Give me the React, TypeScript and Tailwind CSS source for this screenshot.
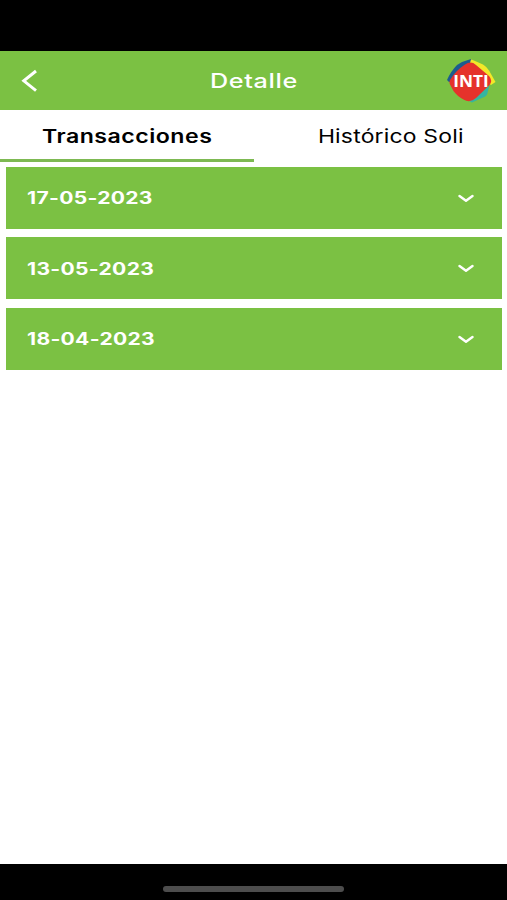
const dates = ["17-05-2023", "13-05-2023", "18-04-2023"];

function Logo() {
  return (
    <svg className="h-[46px] w-[50px]" viewBox="0 0 50 46" aria-label="INTI">
      <path d="M1 22 Q5 13 11 7 Q17 3 25 1 L28 4 L22 10 L8 24 L3 24Z" fill="#1c5c8f" />
      <path d="M25 1.2 L37 6.5 Q41 9 43 12.5 L49.5 24 L45 27 L34 18 L24 5Z" fill="#f3e829" />
      <path d="M43.5 27 L41.5 35 Q41 38 37 39.5 L26 44.5 L22 42.5 L34 30Z" fill="#35b5a0" />
      <path d="M19 6.5 Q25 2.5 30 7 L43 18 Q47 22.5 43.5 27 L30 40 Q24 45.5 17.5 41.5 Q11 38 7.5 33 L4 26.5 Q2.5 23.5 5 20.5 Q10 12.5 19 6.5Z" fill="#e5322b" />
      <text x="7.2" y="28.7" fill="#fff" fontFamily="Open Sans, sans-serif" fontWeight="700" fontSize="16.5" textLength="35.5" lengthAdjust="spacingAndGlyphs">INTI</text>
    </svg>
  );
}

export default function App() {
  return (
    <div className="flex h-[900px] w-[507px] flex-col overflow-hidden bg-black font-['Inter',sans-serif]">
      <div className="h-[51px] shrink-0" />
      <header className="flex h-[59px] shrink-0 items-center justify-between bg-[#7bc143] text-white">
        <div className="flex w-[70px] pl-5">
          <svg className="h-6 w-5" viewBox="0 0 20 24" fill="none" stroke="#fff" strokeWidth="3">
            <path d="M16 2 L3.8 11.8 L16 21.6" />
          </svg>
        </div>
        <h1 className="scale-x-[1.26] text-[20px] font-medium tracking-[0.5px]">Detalle</h1>
        <div className="flex w-[70px] justify-end pr-[11px]">
          <Logo />
        </div>
      </header>
      <main className="flex flex-1 flex-col bg-white">
        <nav className="flex h-[52px] shrink-0 text-black">
          <div className="flex w-[254px] justify-center border-b-[3px] border-[#7db952] pt-[11.5px]">
            <span className="scale-x-[1.25] text-[18.5px] leading-7 font-semibold tracking-[0.4px]">Transacciones</span>
          </div>
          <div className="flex flex-1 justify-center pt-[11.5px] pl-[20px]">
            <span className="scale-x-[1.24] text-[18.5px] leading-7 tracking-[0.15px] whitespace-nowrap">Histórico Soli</span>
          </div>
        </nav>
        <ul className="flex flex-col gap-[8.3px] pt-[5px] pr-[5px] pl-[6px]">
          {dates.map((date) => (
            <li key={date} className="flex h-[62px] items-center justify-between bg-[#7bc143] pr-[28px] pl-[21px] text-white">
              <span className="origin-left scale-x-[1.24] pt-0.5 text-[17px] font-bold tracking-[0.25px]">{date}</span>
              <svg className="h-3 w-4" viewBox="0 0 16 12" fill="none" stroke="#fff" strokeWidth="2.4" strokeLinecap="round" strokeLinejoin="round">
                <path d="M1.5 4 L8 8.8 L14.5 4" />
              </svg>
            </li>
          ))}
        </ul>
      </main>
      <footer className="flex h-9 shrink-0 justify-center pt-[22px]">
        <div className="h-[6px] w-[181px] rounded-full bg-[#4d4d4d]" />
      </footer>
    </div>
  );
}
